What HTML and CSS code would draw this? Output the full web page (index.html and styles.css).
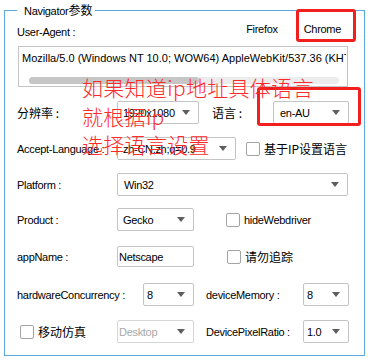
FILE: index.html
```html
<!DOCTYPE html>
<html>
<head>
<meta charset="utf-8">
<link rel="stylesheet" href="styles.css">
</head>
<body>
<div class="page">
  <fieldset class="group">
    <legend class="group-title">Navigator<span class="cjk">参数</span></legend>
    <div class="head-row">
      <span class="head-label">User-Agent :</span>
      <div class="tabs">
        <span class="tab">Firefox</span>
        <span class="tab">Chrome</span>
      </div>
    </div>
    <div class="ua-box">
      <div class="ua-text">Mozilla/5.0 (Windows NT 10.0; WOW64) AppleWebKit/537.36 (KHTML, like Gecko) Chrome/86.0.4240.198 Safari/537.36</div>
      <div class="hscroll"><div class="hthumb"></div></div>
    </div>

    <div class="row row-1">
      <span class="label cjk">分辨率 :</span>
      <div class="select w-res"><span>1920x1080</span></div>
      <span class="label-r lang-label cjk">语言 :</span>
      <div class="select w-lang pad-7"><span>en-AU</span></div>
    </div>

    <div class="row row-2">
      <span class="label">Accept-Language :</span>
      <div class="select w-accept"><span>zh-CN,zh;q=0.9</span></div>
      <span class="check cb-accept"><span class="box"></span><span class="cjk">基于IP设置语言</span></span>
    </div>

    <div class="row row-3">
      <span class="label">Platform :</span>
      <div class="select w-platform pad-7"><span>Win32</span></div>
    </div>

    <div class="row row-4">
      <span class="label">Product :</span>
      <div class="select w-small"><span>Gecko</span></div>
      <span class="check cb-hide"><span class="box"></span><span>hideWebdriver</span></span>
    </div>

    <div class="row row-5">
      <span class="label">appName :</span>
      <div class="textbox w-small"><span>Netscape</span></div>
      <span class="check cb-dnt"><span class="box"></span><span class="cjk">请勿追踪</span></span>
    </div>

    <div class="row row-6">
      <span class="label label-wide">hardwareConcurrency :</span>
      <div class="select w-hw pad-3"><span>8</span></div>
      <span class="label-r mem-label">deviceMemory :</span>
      <div class="select w-mem pad-3"><span>8</span></div>
    </div>

    <div class="row row-7">
      <span class="check cb-mobile"><span class="box"></span><span class="cjk">移动仿真</span></span>
      <div class="select w-small disabled pad-1"><span>Desktop</span></div>
      <span class="label-r mem-label">DevicePixelRatio :</span>
      <div class="select w-mem pad-3"><span>1.0</span></div>
    </div>
  </fieldset>

  <div class="mark mark-chrome"></div>
  <div class="mark mark-lang"></div>
  <div class="note">如果知道ip地址具体语言<br>就根据ip<br>选择语言设置</div>
</div>
</body>
</html>
```

FILE: styles.css
```css
* { box-sizing: border-box; }
html, body { margin: 0; background: #fff; }
body {
  font-family: "Liberation Sans", Tahoma, "Noto Sans CJK SC", sans-serif;
  font-size: 11px;
  line-height: 14px;
  color: #000;
  letter-spacing: -0.3px;
}
.cjk { font-family: "Noto Sans CJK SC", sans-serif; font-size: 12px; letter-spacing: 0; }

.page { position: relative; width: 374px; height: 362px; overflow: hidden; padding-top: 3px; }

.group {
  margin: 0 9px 0 4px;
  padding: 0 0 0 12px;
  border: 1px solid #5aa9df;
  height: 353px;
  min-width: 0;
}
.group-title { padding: 0 3px 0 7px; font-size: 11px; line-height: 14px; }
.group-title .cjk { font-size: 12px; }

.head-row { display: flex; height: 28px; align-items: flex-start; }
.head-label { margin-top: 7px; }
.tabs { margin-left: auto; margin-top: 4px; display: flex; gap: 26px; padding-right: 23px; }

.ua-box {
  margin-left: 1px;
  width: 330px;
  height: 41px;
  border: 1px solid #c4c4c4;
  overflow: hidden;
  padding-top: 4px;
}
.ua-text { white-space: nowrap; overflow: hidden; padding-left: 3px; width: 327px; letter-spacing: 0; }
.hscroll {
  margin: 12px 0 0 10px;
  width: 310px;
  height: 7px;
  border-radius: 4px;
  background: #ececec;
}
.hthumb { width: 170px; height: 7px; border-radius: 4px; background: #c6c6c6; }

.row { display: flex; align-items: center; height: 23px; }
.row-1 { margin-top: 14px; }
.row-2 { margin-top: 13px; }
.row-3 { margin-top: 13px; }
.row-4 { margin-top: 12px; }
.row-5 { margin-top: 14px; }
.row-6 { margin-top: 15px; }
.row-7 { margin-top: 14px; }

.label { width: 100px; flex: none; }
.label-wide { width: 126px; }
.label-r { flex: none; }
.lang-label { margin-left: 13px; width: 61px; }
.mem-label { margin-left: 12px; width: 97px; }

.select, .textbox {
  flex: none;
  height: 23px;
  border: 1px solid #c4c4c4;
  border-radius: 2px;
  background: #fff;
  display: flex;
  align-items: center;
  justify-content: space-between;
  padding: 0 8px 0 5px;
  white-space: nowrap;
  overflow: hidden;
}
.select::after {
  content: "";
  flex: none;
  border-left: 4px solid transparent;
  border-right: 4px solid transparent;
  border-top: 5px solid #5e5e5e;
}
.textbox { height: 21px; padding-left: 1px; }
.pad-7 { padding-left: 6px; }
.pad-3 { padding-left: 3px; }
.pad-1 { padding-left: 1px; }
.disabled { color: #a8a8a8; border-color: #d6d6d6; }

.w-res { width: 82px; }
.w-lang { width: 76px; }
.w-accept { width: 119px; }
.w-platform { width: 231px; }
.w-small { width: 77px; }
.w-hw { width: 51px; }
.w-mem { width: 46px; }

.check { display: flex; align-items: center; flex: none; }
.box {
  width: 14px;
  height: 14px;
  border: 1px solid #a3a3a3;
  border-radius: 2px;
  background: #fff;
  margin-right: 4px;
  flex: none;
}
.cb-accept { margin-left: 10px; }
.cb-hide { margin-left: 32px; }
.cb-dnt { margin-left: 33px; }
.cb-mobile { width: 100px; padding-left: 3px; }

.mark {
  position: absolute;
  border: 3px solid #f21f1f;
  border-radius: 3px;
}
.mark-chrome { left: 296px; top: 9px; width: 60px; height: 33px; }
.mark-lang { left: 257px; top: 87px; width: 104px; height: 39px; }

.note {
  position: absolute;
  left: 82px;
  top: 73px;
  font-family: "Noto Sans CJK SC", sans-serif;
  font-size: 21px;
  font-weight: 300;
  line-height: 28.5px;
  color: #ff2a2a;
  letter-spacing: 0.3px;
  white-space: nowrap;
}
```
